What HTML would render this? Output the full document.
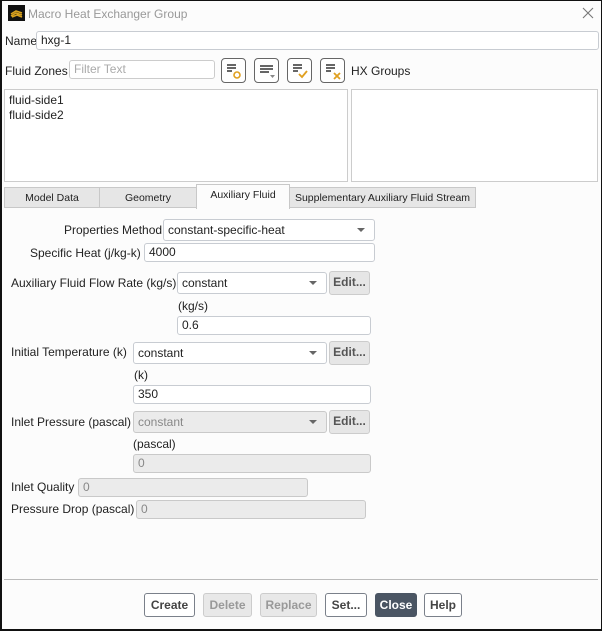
<!DOCTYPE html>
<html><head><style>
*{box-sizing:border-box;margin:0;padding:0}
body{width:602px;height:631px;background:#fcfcfc;font-family:"Liberation Sans",sans-serif;font-size:12px;color:#222;position:relative;overflow:hidden}
#bd{position:absolute;left:0;top:0;width:602px;height:631px;border:1px solid #111;border-width:1px 1px 2px 2px;pointer-events:none}
.a{position:absolute;white-space:nowrap}
.in{position:absolute;border:1px solid #c8ccd2;border-radius:3px;background:#fff;padding-left:4px;line-height:17px}
.dis{background:#ebebeb;color:#888;border-color:#c9c9c9}
.sel::after{content:"";position:absolute;right:9px;top:8px;border:4px solid transparent;border-top:4px solid #666;border-bottom:0;width:0}
.edit{position:absolute;background:#e6e6e6;border:1px solid #ccc;border-radius:3px;text-align:center;font-weight:bold;color:#555;line-height:21px;font-size:12px}
.tab{position:absolute;top:187px;height:21px;background:#e6e6e6;border:1px solid #c8c8c8;text-align:center;line-height:20px;font-size:10.5px}
.ib{position:absolute;top:58px;width:25px;height:25px;border:1px solid #666;border-radius:4px;background:#fff}
.btn{position:absolute;top:593px;height:24px;border:1px solid #7a808a;border-radius:3px;background:#fff;font-weight:bold;text-align:center;line-height:22px;color:#444}
</style></head><body>
<div class="a" style="left:8px;top:5px;width:17px;height:16px;background:#111"><svg width="17" height="16"><path d="M3 9 L8 6 L14 8 M3 11 L8 8 L14 10 M4 12 L9 10 L14 12" stroke="#d9a21e" stroke-width="1.6" fill="none"/></svg></div>
<div class="a" style="left:28px;top:7px;color:#999">Macro Heat Exchanger Group</div>
<svg class="a" style="left:582px;top:7px" width="12" height="12"><path d="M1 1L11 11M11 1L1 11" stroke="#777" stroke-width="1.1"/></svg>

<div class="a" style="left:5px;top:34px">Name</div>
<div class="in" style="left:36px;top:31px;width:563px;height:19px">hxg-1</div>
<div class="a" style="left:5px;top:64px">Fluid Zones</div>
<div class="in" style="left:69px;top:60px;width:146px;height:19px;color:#aaa;border-color:#ccc">Filter Text</div>
<div class="ib" style="left:221px"><svg width="23" height="23"><path d="M5 6h9M5 9h9M5 12h5" stroke="#333" stroke-width="1.6"/><circle cx="15" cy="16" r="3" stroke="#e0a020" stroke-width="1.6" fill="none"/></svg></div>
<div class="ib" style="left:254px"><svg width="23" height="23"><path d="M5 7h13M5 10h13M5 13h9" stroke="#333" stroke-width="1.6"/><path d="M15 16h5l-2.5 3z" fill="#888"/></svg></div>
<div class="ib" style="left:287px"><svg width="23" height="23"><path d="M5 6h9M5 9h9M5 12h5" stroke="#333" stroke-width="1.6"/><path d="M11 15l3 3 5-6" stroke="#e0a020" stroke-width="1.8" fill="none"/></svg></div>
<div class="ib" style="left:320px"><svg width="23" height="23"><path d="M5 6h9M5 9h9M5 12h5" stroke="#333" stroke-width="1.6"/><path d="M13 14l6 6M19 14l-6 6" stroke="#e0a020" stroke-width="1.8"/></svg></div>
<div class="a" style="left:351px;top:64px">HX Groups</div>

<div class="a" style="left:4px;top:89px;width:344px;height:93px;border:1px solid #ccc;background:#fff;padding:3px 4px;line-height:15px">fluid-side1<br>fluid-side2</div>
<div class="a" style="left:351px;top:89px;width:247px;height:93px;border:1px solid #ccc;background:#fff"></div>

<div class="tab" style="left:4px;width:96px">Model Data</div>
<div class="tab" style="left:99px;width:98px">Geometry</div>
<div class="tab" style="left:289px;width:187px">Supplementary Auxiliary Fluid Stream</div>
<div class="tab" style="left:196px;width:94px;top:184px;height:25px;background:#fcfcfc;border-bottom:none">Auxiliary Fluid</div>

<div class="a" style="left:64px;top:223px">Properties Method</div>
<div class="in sel" style="left:163px;top:219px;width:212px;height:22px;line-height:20px">constant-specific-heat</div>
<div class="a" style="left:30px;top:246px">Specific Heat (j/kg-k)</div>
<div class="in" style="left:144px;top:243px;width:231px;height:19px">4000</div>

<div class="a" style="left:11px;top:276px">Auxiliary Fluid Flow Rate (kg/s)</div>
<div class="in sel" style="left:177px;top:272px;width:150px;height:22px;line-height:20px">constant</div>
<div class="edit" style="left:329px;top:271px;width:41px;height:24px">Edit...</div>
<div class="a" style="left:178px;top:299px">(kg/s)</div>
<div class="in" style="left:177px;top:316px;width:194px;height:19px">0.6</div>

<div class="a" style="left:11px;top:345px">Initial Temperature (k)</div>
<div class="in sel" style="left:133px;top:342px;width:194px;height:22px;line-height:20px">constant</div>
<div class="edit" style="left:329px;top:341px;width:41px;height:24px">Edit...</div>
<div class="a" style="left:134px;top:368px">(k)</div>
<div class="in" style="left:133px;top:385px;width:238px;height:19px">350</div>

<div class="a" style="left:11px;top:415px">Inlet Pressure (pascal)</div>
<div class="in sel dis" style="left:133px;top:411px;width:194px;height:22px;line-height:20px">constant</div>
<div class="edit" style="left:329px;top:410px;width:41px;height:24px">Edit...</div>
<div class="a" style="left:133px;top:437px">(pascal)</div>
<div class="in dis" style="left:133px;top:454px;width:238px;height:19px">0</div>

<div class="a" style="left:11px;top:480px">Inlet Quality</div>
<div class="in dis" style="left:78px;top:478px;width:230px;height:19px">0</div>
<div class="a" style="left:11px;top:502px">Pressure Drop (pascal)</div>
<div class="in dis" style="left:136px;top:500px;width:230px;height:19px">0</div>

<div class="a" style="left:4px;top:579px;width:594px;height:1px;background:#bbb"></div>
<div class="btn" style="left:144px;width:51px">Create</div>
<div class="btn" style="left:203px;width:49px;background:#e8e8e8;border-color:#ccc;color:#999">Delete</div>
<div class="btn" style="left:260px;width:57px;background:#e8e8e8;border-color:#ccc;color:#999">Replace</div>
<div class="btn" style="left:325px;width:42px">Set...</div>
<div class="btn" style="left:375px;width:42px;background:#4a5563;border-color:#4a5563;color:#fff">Close</div>
<div class="btn" style="left:424px;width:38px">Help</div>
<div id="bd"></div>
</body></html>
